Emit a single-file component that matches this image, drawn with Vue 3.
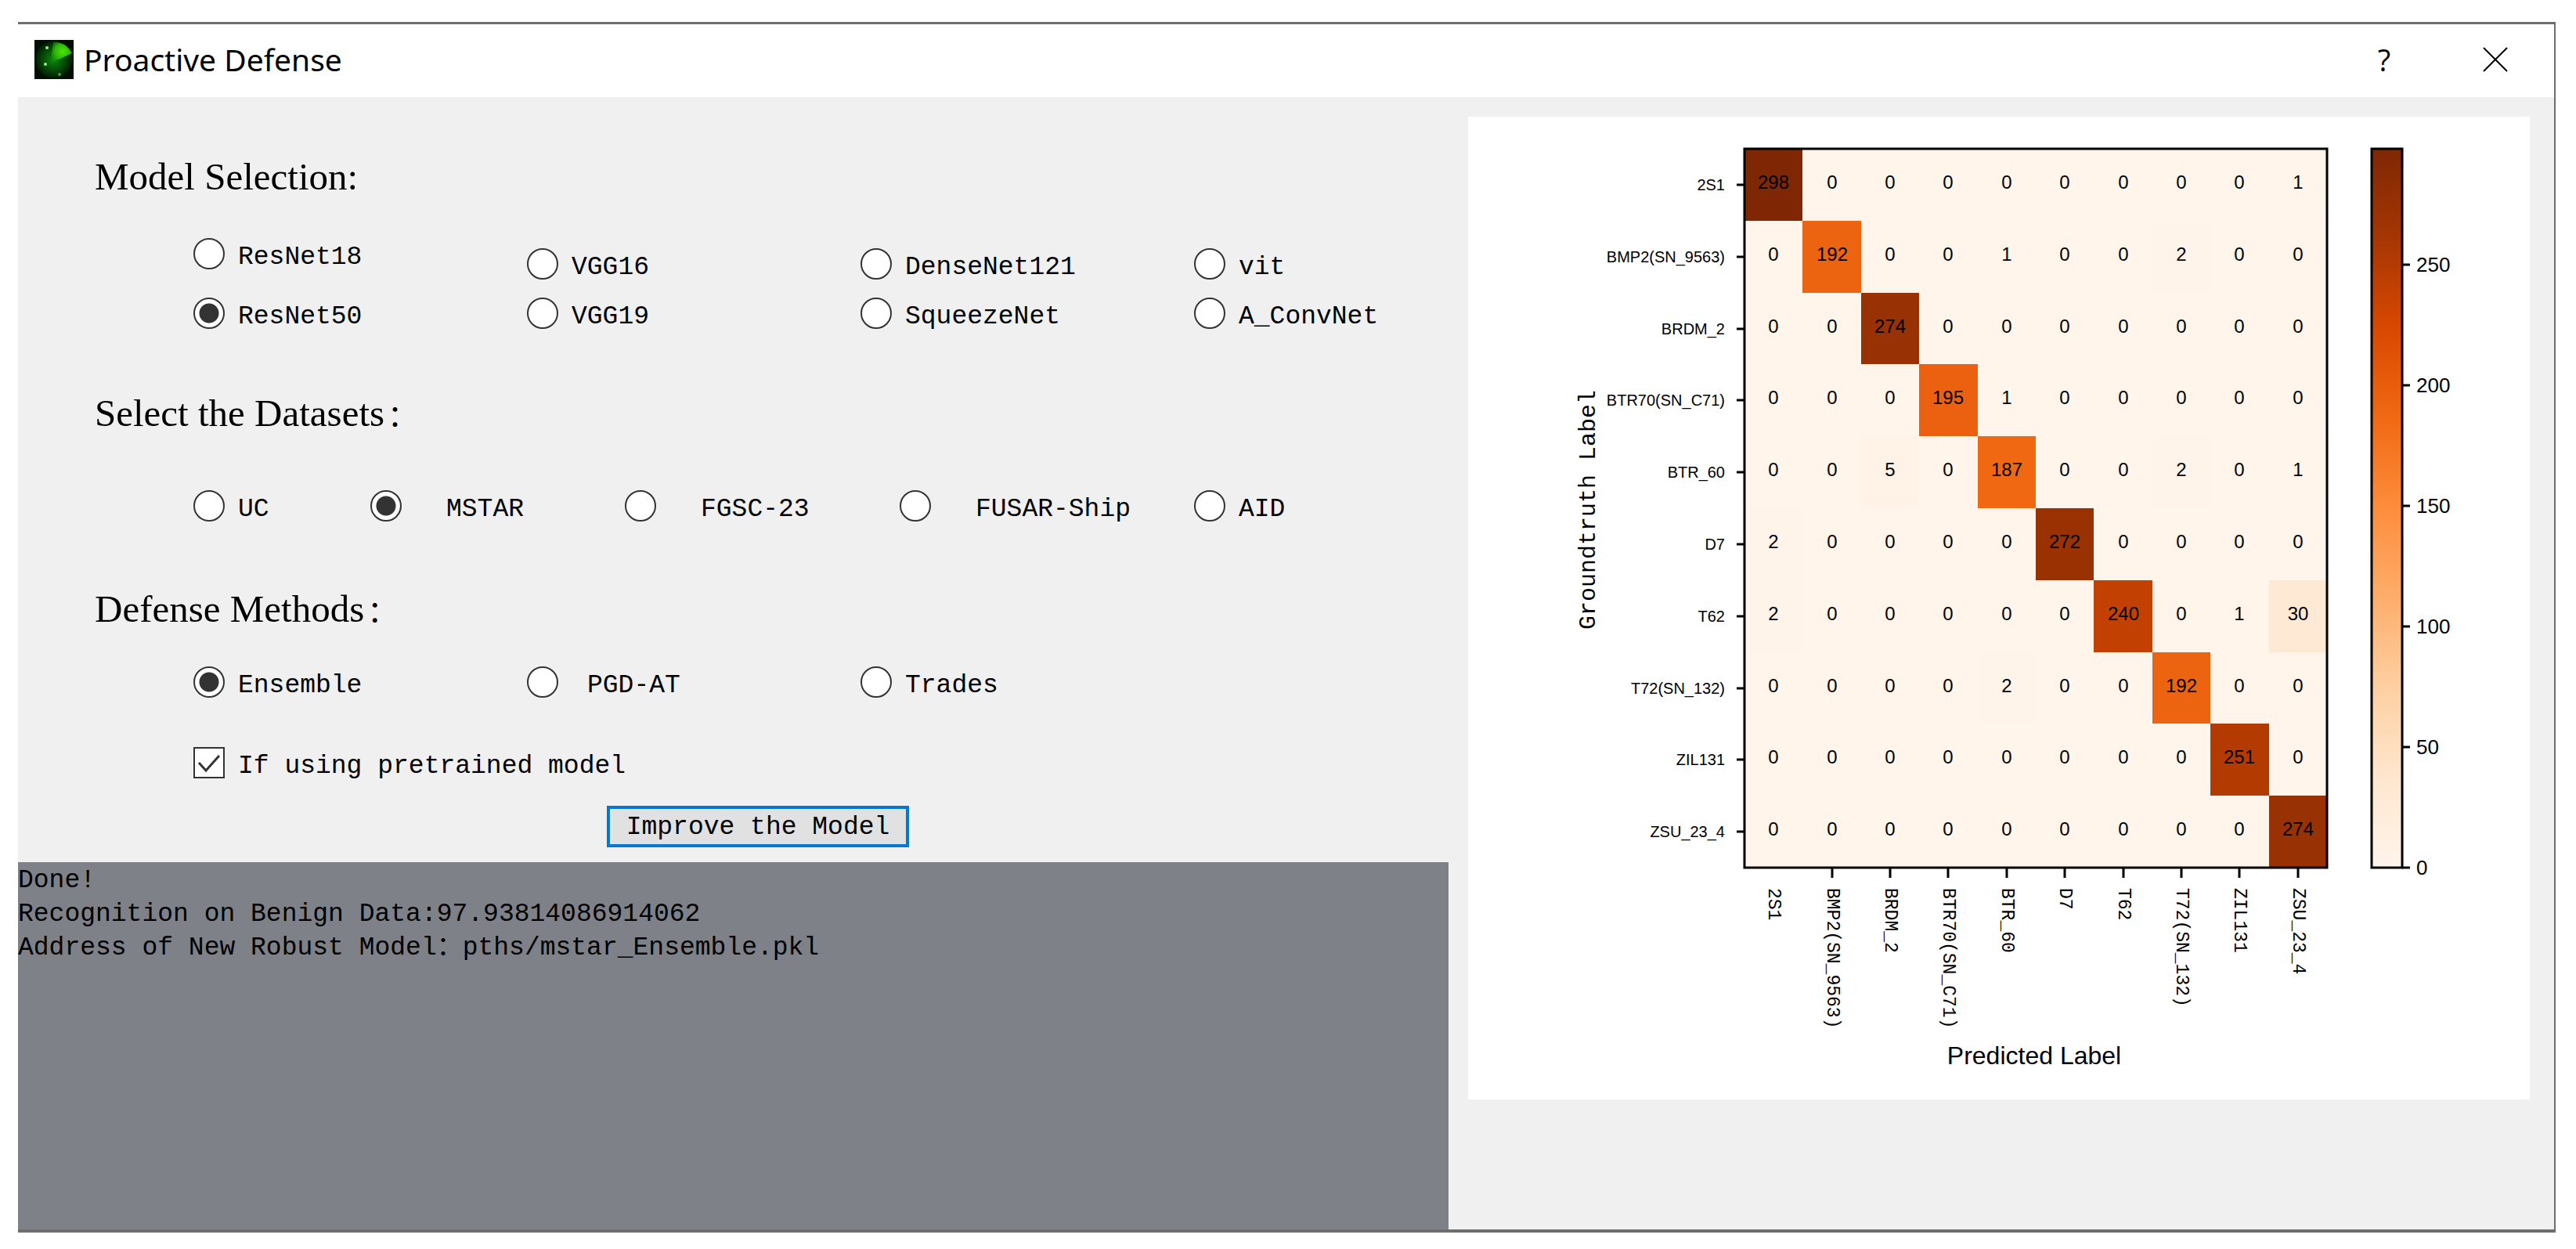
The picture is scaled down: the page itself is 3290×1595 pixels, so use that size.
<script setup>
import { ref } from 'vue'

const models = [
  [
    { id: 'ResNet18', raised: true },
    { id: 'VGG16' },
    { id: 'DenseNet121' },
    { id: 'vit' },
  ],
  [
    { id: 'ResNet50' },
    { id: 'VGG19' },
    { id: 'SqueezeNet' },
    { id: 'A_ConvNet' },
  ],
]
const datasets = [
  { id: 'UC' },
  { id: 'MSTAR', wide: true },
  { id: 'FGSC-23', wide: true },
  { id: 'FUSAR-Ship', wide: true },
  { id: 'AID' },
]
const methods = [{ id: 'Ensemble' }, { id: 'PGD-AT', mid: true }, { id: 'Trades' }]

const model = ref('ResNet50')
const dataset = ref('MSTAR')
const method = ref('Ensemble')
const pretrained = ref(true)

const labels = [
  '2S1', 'BMP2(SN_9563)', 'BRDM_2', 'BTR70(SN_C71)', 'BTR_60',
  'D7', 'T62', 'T72(SN_132)', 'ZIL131', 'ZSU_23_4',
]
const matrix = [
  [298, 0, 0, 0, 0, 0, 0, 0, 0, 1],
  [0, 192, 0, 0, 1, 0, 0, 2, 0, 0],
  [0, 0, 274, 0, 0, 0, 0, 0, 0, 0],
  [0, 0, 0, 195, 1, 0, 0, 0, 0, 0],
  [0, 0, 5, 0, 187, 0, 0, 2, 0, 1],
  [2, 0, 0, 0, 0, 272, 0, 0, 0, 0],
  [2, 0, 0, 0, 0, 0, 240, 0, 1, 30],
  [0, 0, 0, 0, 2, 0, 0, 192, 0, 0],
  [0, 0, 0, 0, 0, 0, 0, 0, 251, 0],
  [0, 0, 0, 0, 0, 0, 0, 0, 0, 274],
]
const max = 298
const ramp = ['fff5eb', 'fee6ce', 'fdd0a2', 'fdae6b', 'fd8d3c', 'f16913', 'd94801', 'a63603', '7f2704']

function shade(value) {
  const t = (value / max) * (ramp.length - 1)
  const i = Math.min(Math.floor(t), ramp.length - 2)
  const part = (hex, k) => parseInt(hex.slice(k * 2, k * 2 + 2), 16)
  const mix = [0, 1, 2].map((k) =>
    Math.round(part(ramp[i], k) + (part(ramp[i + 1], k) - part(ramp[i], k)) * (t - i))
  )
  return `rgb(${mix.join(',')})`
}

// Plot area inside the chart's view box
const plot = { x: 353, y: 41, w: 744, h: 918 }
const edgeX = (i) => plot.x + Math.round((plot.w * i) / 10)
const edgeY = (i) => plot.y + Math.round((plot.h * i) / 10)
const midX = (i) => plot.x + Math.round((plot.w * (i + 0.5)) / 10)
const midY = (i) => plot.y + Math.round((plot.h * (i + 0.5)) / 10)
const scaleY = (v) => plot.y + plot.h - Math.round((plot.h * v) / max)
const scaleTicks = [0, 50, 100, 150, 200, 250]
</script>

<template>
  <main class="window">
    <header class="titlebar">
      <svg class="logo" viewBox="0 0 50 50" aria-hidden="true">
        <defs>
          <radialGradient id="glow" cx="0.5" cy="0.5" r="0.52">
            <stop offset="0" stop-color="#0a8a0a" />
            <stop offset="0.55" stop-color="#064d08" />
            <stop offset="1" stop-color="#021602" />
          </radialGradient>
          <radialGradient id="beam" gradientUnits="userSpaceOnUse" cx="36" cy="15" r="20">
            <stop offset="0" stop-color="#4be606" />
            <stop offset="0.5" stop-color="#2cb508" />
            <stop offset="1" stop-color="#0a7a0a" stop-opacity="0.2" />
          </radialGradient>
        </defs>
        <rect width="50" height="50" fill="#020d03" />
        <circle cx="25" cy="25" r="24" fill="url(#glow)" />
        <path d="M20 30 L24 3 Q40 2 48 17 Z" fill="url(#beam)" />
        <circle cx="16" cy="10" r="2" fill="#8df08a" />
        <circle cx="14" cy="31" r="2" fill="#8df08a" />
        <circle cx="32" cy="44" r="2" fill="#3f9a3c" />
      </svg>
      <h1>Proactive Defense</h1>
      <button class="caption" type="button" aria-label="Help">?</button>
      <button class="caption close" type="button" aria-label="Close">
        <svg viewBox="0 0 32 32" aria-hidden="true">
          <path d="M1 1 L31 31 M31 1 L1 31" stroke="#000" stroke-width="2" fill="none" />
        </svg>
      </button>
    </header>

    <div class="body">
      <section class="left">
        <form class="form" @submit.prevent>
          <h2>Model Selection:</h2>
          <div class="models">
            <div v-for="(row, r) in models" :key="r" class="row four">
              <label v-for="m in row" :key="m.id" class="option" :class="{ raised: m.raised }">
                <input v-model="model" type="radio" name="model" :value="m.id" />
                <span>{{ m.id }}</span>
              </label>
            </div>
          </div>

          <h2>Select the Datasets<span class="colon">：</span></h2>
          <div class="row five datasets">
            <label v-for="d in datasets" :key="d.id" class="option" :class="{ wide: d.wide }">
              <input v-model="dataset" type="radio" name="dataset" :value="d.id" />
              <span>{{ d.id }}</span>
            </label>
          </div>

          <h2>Defense Methods<span class="colon">：</span></h2>
          <div class="row four methods">
            <label v-for="m in methods" :key="m.id" class="option" :class="{ mid: m.mid }">
              <input v-model="method" type="radio" name="method" :value="m.id" />
              <span>{{ m.id }}</span>
            </label>
          </div>

          <label class="option pretrained">
            <input v-model="pretrained" type="checkbox" />
            <span>If using pretrained model</span>
          </label>

          <button class="run" type="submit">Improve the Model</button>
        </form>

        <output class="console">
          <span>Done!</span>
          <span>Recognition on Benign Data:97.93814086914062</span>
          <span>Address of New Robust Model：pths/mstar_Ensemble.pkl</span>
        </output>
      </section>

      <section class="right">
        <svg class="chart" viewBox="0 0 1356 1255" role="img" aria-label="Confusion matrix">
          <defs>
            <linearGradient id="ramp" x1="0" y1="1" x2="0" y2="0">
              <stop
                v-for="(c, i) in ramp"
                :key="c"
                :offset="i / (ramp.length - 1)"
                :stop-color="'#' + c"
              />
            </linearGradient>
          </defs>

          <g v-for="(row, r) in matrix" :key="'r' + r">
            <rect
              v-for="(v, c) in row"
              :key="c"
              :x="edgeX(c)"
              :y="edgeY(r)"
              :width="edgeX(c + 1) - edgeX(c)"
              :height="edgeY(r + 1) - edgeY(r)"
              :fill="shade(v)"
              shape-rendering="crispEdges"
            />
            <text
              v-for="(v, c) in row"
              :key="'t' + c"
              class="value"
              :x="midX(c)"
              :y="midY(r) + 5"
            >{{ v }}</text>
          </g>
          <rect class="frame" :x="plot.x" :y="plot.y" :width="plot.w" :height="plot.h" />

          <g v-for="(name, i) in labels" :key="name">
            <path class="tick" :d="`M${plot.x - 10} ${midY(i)} h10`" />
            <text class="row-name" :x="plot.x - 25" :y="midY(i) + 7">{{ name }}</text>
            <path v-if="i > 0" class="tick" :d="`M${midX(i)} ${plot.y + plot.h} v13`" />
            <text
              class="col-name"
              :transform="`translate(${midX(i) - 6} ${plot.y + plot.h + 26}) rotate(90)`"
            >{{ name }}</text>
          </g>

          <text class="axis-y" transform="translate(162 502) rotate(-90)">Groundtruth Label</text>
          <text class="axis-x" x="723" y="1210">Predicted Label</text>

          <rect class="frame" x="1154" :y="plot.y" width="39" :height="plot.h" fill="url(#ramp)" />
          <g v-for="v in scaleTicks" :key="v">
            <path class="tick" :d="`M1193 ${scaleY(v)} h10`" />
            <text class="scale" x="1211" :y="scaleY(v) + 9">{{ v }}</text>
          </g>
        </svg>
      </section>
    </div>
  </main>
</template>

<style>
body {
  margin: 0;
  background: #fff;
}
</style>

<style scoped>
.window {
  margin: 28px 26px 21px 23px;
  border: solid #6e6e6e;
  border-width: 3px 2px 4px 0;
  background: #f0f0f0;
  color: #000;
  font-family: "Liberation Mono", "Noto Sans CJK SC", monospace;
  font-size: 33px;
}
.titlebar {
  display: flex;
  align-items: center;
  height: 93px;
  padding: 0 38px 3px 21px;
  background: #fff;
  box-sizing: border-box;
}
.logo {
  width: 50px;
  height: 50px;
}
h1 {
  flex: 1;
  margin: 0 0 0 13px;
  font: 400 39px/50px "Noto Sans", sans-serif;
}
.caption {
  width: 74px;
  height: 74px;
  padding: 0;
  border: 0;
  background: none;
  color: #000;
  font: 400 38px/50px "Open Sans", "Noto Sans", sans-serif;
}
.close {
  display: flex;
  align-items: center;
  justify-content: center;
  margin-left: 68px;
}
.close svg {
  width: 32px;
  height: 32px;
}
.body {
  display: grid;
  grid-template-columns: 1827fr 1412fr;
}
.left {
  display: flex;
  flex-direction: column;
  min-width: 0;
}
.form {
  display: flex;
  flex-direction: column;
  padding: 72px 0 19px;
}
h2 {
  height: 60px;
  margin: 0 0 0 98px;
  font: 400 49px/60px "Liberation Serif", "Noto Sans CJK SC", serif;
}
.colon {
  margin-left: 4px;
  font-size: 38px;
  line-height: 38px;
}
.models {
  display: flex;
  flex-direction: column;
  gap: 23px;
  margin: 61px 0 78px;
}
.row {
  display: grid;
  padding-left: 224px;
}
.four {
  grid-template-columns: 426fr 426fr 426fr 325fr;
}
.five {
  grid-template-columns: 226fr 325fr 351fr 376fr 325fr;
}
.datasets {
  margin: 68px 0 82px;
}
.methods {
  margin: 43px 0;
}
.option {
  display: flex;
  align-items: center;
  gap: 17px;
  height: 40px;
  line-height: 40px;
  white-space: nowrap;
}
.option span {
  padding-top: 9px;
}
.raised {
  margin-top: -13px;
}
.wide {
  gap: 57px;
}
.mid {
  gap: 37px;
}
.option input {
  appearance: none;
  flex: none;
  width: 40px;
  height: 40px;
  margin: 0;
  border: 2px solid #333;
  background: #fff;
}
input[type="radio"] {
  border-radius: 50%;
}
input[type="radio"]:checked {
  background: radial-gradient(circle, #333 12px, #fff 13px);
}
input[type="checkbox"]:checked {
  background: #fff url("data:image/svg+xml,%3Csvg xmlns='http://www.w3.org/2000/svg' viewBox='0 0 36 36'%3E%3Cpath d='M5 18 L14 28 L31 9' fill='none' stroke='%23333' stroke-width='3'/%3E%3C/svg%3E") center / 36px 36px no-repeat;
}
.pretrained {
  margin: 20px 0 35px 224px;
}
.run {
  align-self: center;
  width: 386px;
  height: 53px;
  margin-left: 63px;
  padding: 3px 0 0;
  border: 4px solid #0078d7;
  background: #e1e1e1;
  color: #000;
  font: inherit;
  line-height: 42px;
}
.console {
  display: flex;
  flex: 1;
  flex-direction: column;
  min-height: 469px;
  padding-top: 2px;
  background: #7f8188;
  line-height: 43px;
  box-sizing: border-box;
}
.right {
  min-width: 0;
  padding: 25px 31px 0 25px;
}
.chart {
  display: block;
  width: 100%;
  background: #fff;
  font-family: "Liberation Sans", sans-serif;
}
.frame {
  stroke: #000;
  stroke-width: 3;
}
.frame:not([fill]) {
  fill: none;
}
.tick {
  stroke: #000;
  stroke-width: 3;
}
.value {
  font-size: 24px;
  text-anchor: middle;
}
.row-name {
  font-size: 20px;
  text-anchor: end;
}
.col-name {
  font-family: "Liberation Mono", monospace;
  font-size: 23px;
}
.scale {
  font-size: 26px;
}
.axis-y {
  font-family: "Liberation Mono", monospace;
  font-size: 30px;
  text-anchor: middle;
}
.axis-x {
  font-family: "Liberation Sans", sans-serif;
  font-size: 32px;
  text-anchor: middle;
}
</style>
